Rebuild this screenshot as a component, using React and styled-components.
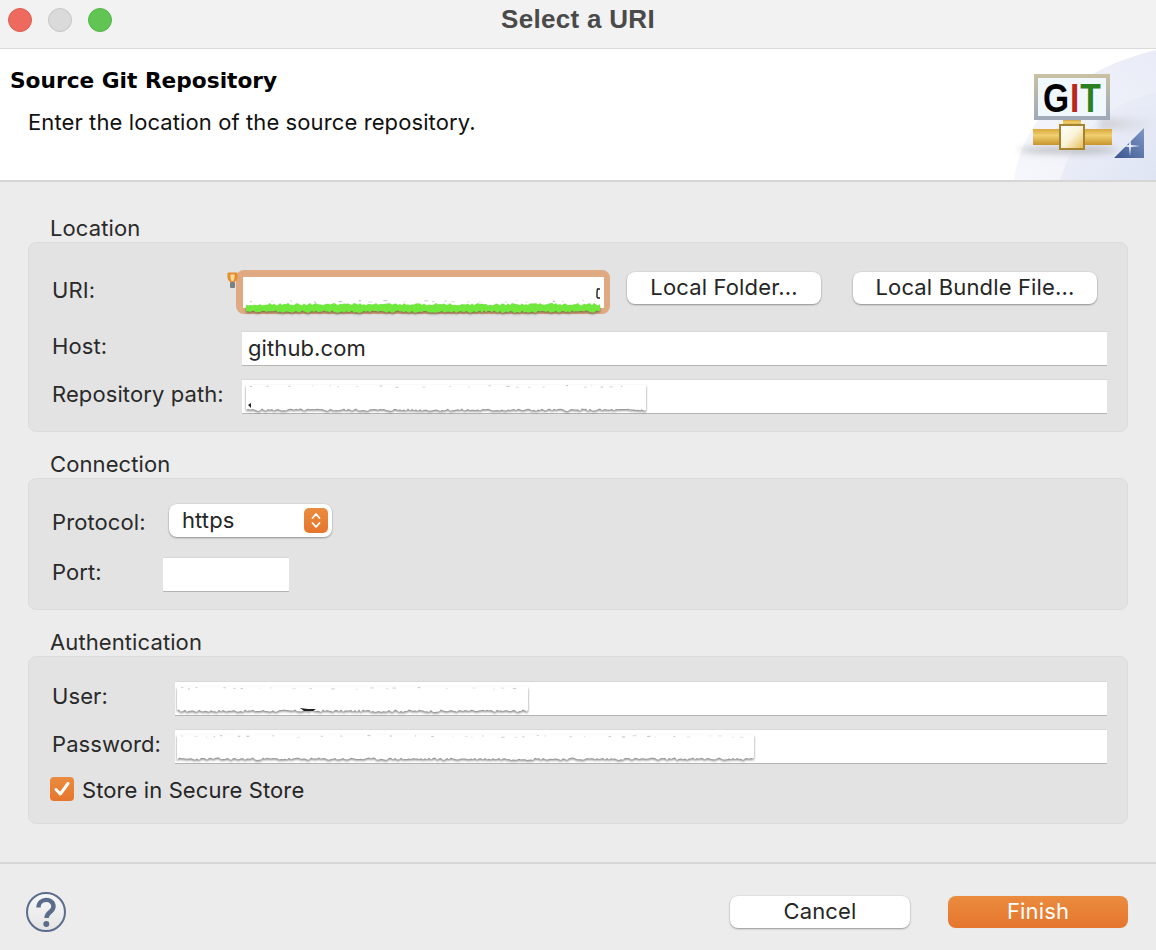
import React, { useId } from "react";
import styled, { createGlobalStyle } from "styled-components";

const Global = createGlobalStyle`
  html, body { margin: 0; padding: 0; background: #ececec; }
  * { box-sizing: border-box; }
`;
const Window = styled.div`
  width: 1156px; height: 950px; overflow: hidden; display: flex; flex-direction: column;
  background: #ececec; color: #262626;
  font-family: Inter, "Open Sans", "Liberation Sans", sans-serif; font-size: 22px; letter-spacing: .1px;
`;
const TitleBar = styled.div`
  position: relative; height: 49px; flex: none; display: flex; align-items: center; gap: 16px;
  padding: 0 0 9px 8px; background: #f2f2f2; border-bottom: 1px solid #d9d9d9;
`;
const Light = styled.span`
  width: 24px; height: 24px; border-radius: 50%; background: ${p => p.$c}; border: 1px solid ${p => p.$b};
`;
const WindowTitle = styled.div`
  position: absolute; left: 0; right: 0; top: 2px; text-align: center; letter-spacing: .3px;
  font-family: "Liberation Sans", sans-serif; font-weight: 700; font-size: 26px; line-height: 34px; color: #4a4a4a;
`;
const Header = styled.header`
  position: relative; height: 133px; flex: none; background: #fff; border-bottom: 2px solid #d6d6d6; padding: 17px 0 0 10px;
`;
const PageTitle = styled.h1`
  margin: 0; font-family: "DejaVu Sans", sans-serif; font-weight: 700; font-size: 21.7px; line-height: 30px; color: #000; letter-spacing: 0;
`;
const PageSub = styled.p`
  margin: 11px 0 0 18px; font-size: 22px; line-height: 30px; color: #111;
`;
const Banner = styled.svg`
  position: absolute; right: 0; top: 0;
`;
const Body = styled.main`
  flex: 1; padding: 33px 28px 0; display: flex; flex-direction: column; gap: 19px;
  border-bottom: 2px solid #d6d6d6;
`;
const Group = styled.section`
  display: flex; flex-direction: column;
`;
const Legend = styled.div`
  height: 27px; line-height: 27px; padding-left: 22px; color: #2a2a2a;
`;
const Box = styled.div`
  display: flex; flex-direction: column; gap: ${p => p.$gap}px; height: ${p => p.$h}px;
  padding: ${p => p.$top}px 20px 0 23px;
  background: #e3e3e3; border: 1px solid #dcdcdc; border-radius: 8px;
`;
const Row = styled.div`
  display: flex; align-items: center;
  margin: ${p => p.$m || 0};
`;
const Label = styled.label`
  flex: none; width: ${p => p.$w}px; color: #2a2a2a; line-height: 30px; position: relative; top: ${p => p.$dy || 0}px;
`;
const Field = styled.div`
  position: relative; flex: ${p => (p.$w ? "none" : "1")}; width: ${p => p.$w ? `${p.$w}px` : "auto"}; height: 34px;
  padding-left: 6px; line-height: 32px; background: #fff; color: #262626;
  border-top: 1px solid #d8d8d8; box-shadow: 0 1px 0 #b4b4b4;
`;
const Ring = styled.div`
  position: relative; flex: none; width: 374px; height: 44px; padding: 7px 6px 6px 7px;
  background: #dfaa82; border-radius: 8px; margin-right: 17px;
`;
const RingInner = styled.div`
  height: 100%; background: #fff; border-radius: 1px;
`;
const Bulb = styled.svg`
  position: absolute; left: -9px; top: 2px;
`;
const Scribble = styled.svg`
  position: absolute; left: ${p => p.$x}px; top: ${p => p.$y}px; overflow: visible;
`;
const Pill = styled.button`
  flex: none; width: ${p => p.$w}px; height: 32px; padding: 0 0 3px; margin-right: ${p => p.$mr || 0}px; margin-top: ${p => p.$mt || 0}px;
  align-self: ${p => p.$mt ? "flex-start" : "auto"};
  border: 0; border-radius: 8px; background: #fff; font: inherit; color: #262626; letter-spacing: .15px;
  box-shadow: 0 1px 2px rgba(0,0,0,.35), 0 0 0 .5px rgba(0,0,0,.06);
  line-height: 28px;
`;
const PrimaryPill = styled(Pill)`
  background: linear-gradient(#ea8c3f, #e5752c); color: #fff; box-shadow: 0 0 1px rgba(0,0,0,.15);
`;
const Select = styled.div`
  flex: none; width: 163px; height: 33px; margin-left: 1px; padding: 0 4px 0 13px; display: flex; align-items: center; justify-content: space-between;
  background: #fff; border-radius: 8px; box-shadow: 0 1px 2px rgba(0,0,0,.35), 0 0 0 .5px rgba(0,0,0,.06); color: #262626;
`;
const SelectValue = styled.span`
  position: relative; top: -1px;
`;
const Stepper = styled.span`
  width: 24px; height: 25px; border-radius: 5px; background: linear-gradient(#ea8c3f, #e5752c); display: flex; align-items: center; justify-content: center;
`;
const CheckBox = styled.span`
  width: 24px; height: 24px; flex: none; margin-right: 8px; border-radius: 4px; background: linear-gradient(#ea8c3f, #e5752c);
  display: flex; align-items: center; justify-content: center;
`;
const CheckText = styled.span`
  position: relative; top: 1px;
`;
const Footer = styled.footer`
  height: 86px; flex: none; display: flex; align-items: center; padding: 10px 28px 0 26px;
`;
const Spacer = styled.div`flex: 1;`;

const rng = seed => {
  let s = seed;
  return () => { s = (s * 9301 + 49297) % 233280; return s / 233280; };
};
const rough = (w, h, seed, amp, step = 3) => {
  const r = rng(seed);
  const pts = [];
  for (let x = 0; x <= w; x += step) pts.push(`${x},${(h - r() * amp).toFixed(1)}`);
  return `M0,1 L${w},1 L${w},${h - amp} L${pts.reverse().join(" L")} Z`;
};
const roughBand = (w, h, seed, amp) => {
  const r = rng(seed);
  const top = [];
  const bottom = [];
  for (let x = 0; x <= w; x += 2) {
    top.push(`${x},${(r() * amp).toFixed(1)}`);
    bottom.push(`${x},${(h - r() * amp).toFixed(1)}`);
  }
  return `M${top.join(" L")} L${bottom.reverse().join(" L")} Z`;
};
const specks = (w, seed) => {
  const r = rng(seed);
  const out = [];
  for (let x = 4; x < w - 4; x += 6 + r() * 22) out.push({ x, y: 1 + r() * 2, l: 1 + r() * 3, o: .25 + r() * .5 });
  return out;
};

const Redaction = ({ x, y, w, h, seed, children }) => {
  const id = useId();
  return (
    <Scribble $x={x} $y={y} width={w} height={h}>
      <defs>
        <filter id={id} x="-2%" y="-20%" width="104%" height="150%" colorInterpolationFilters="sRGB">
          <feDropShadow dx="0" dy="1.5" stdDeviation="1.2" floodColor="#000" floodOpacity=".5" />
        </filter>
      </defs>
      <path d={rough(w, h, seed, 2.5, 2)} fill="#fff" filter={`url(#${id})`} />
      {specks(w, seed + 3).map((d, i) => (
        <rect key={i} x={d.x} y={d.y} width={d.l} height="1" fill="#aaa" opacity={d.o} />
      ))}
      {children}
    </Scribble>
  );
};

const GreenMark = () => {
  const id = useId();
  return (
    <Scribble $x={10} $y={26} width={354} height={17}>
      <defs>
        <filter id={id} x="-2%" y="-30%" width="104%" height="170%" colorInterpolationFilters="sRGB">
          <feDropShadow dx="0" dy="1.5" stdDeviation="1" floodColor="#000" floodOpacity=".4" />
        </filter>
      </defs>
      <path transform="translate(0,7)" d={roughBand(354, 10, 37, 2.5)} fill="#70e83c" filter={`url(#${id})`} />
      {specks(350, 9).map((d, i) => (
        <rect key={i} x={d.x} y={d.y + 3} width={d.l} height="1" fill="#999" opacity={d.o} />
      ))}
      <path d="M354,-7 L351.5,-7 L351,-4 L351,1 L352,2 L354,2" fill="none" stroke="#222" strokeWidth="1.4" />
    </Scribble>
  );
};

const GitBanner = () => (
  <Banner width="156" height="131" viewBox="1000 49 156 131">
    <defs>
      <linearGradient id="bgA" x1="0" y1="1" x2="1" y2="0">
        <stop offset="0" stopColor="#f6f7fc" />
        <stop offset="1" stopColor="#e9ecf7" />
      </linearGradient>
      <linearGradient id="bgB" x1="0" y1="0" x2="1" y2="1">
        <stop offset="0" stopColor="#f1f3fa" />
        <stop offset="1" stopColor="#dbe1f2" />
      </linearGradient>
      <linearGradient id="frame" x1="0" y1="0" x2="0" y2="1">
        <stop offset="0" stopColor="#c9c1a2" />
        <stop offset="1" stopColor="#9fa9b8" />
      </linearGradient>
      <linearGradient id="pipe" x1="0" y1="0" x2="0" y2="1">
        <stop offset="0" stopColor="#d9a83c" />
        <stop offset=".4" stopColor="#f0d070" />
        <stop offset="1" stopColor="#c8942c" />
      </linearGradient>
      <linearGradient id="joint" x1="0" y1="0" x2="1" y2="1">
        <stop offset="0" stopColor="#ffffff" />
        <stop offset=".5" stopColor="#fbf3d8" />
        <stop offset="1" stopColor="#e4b94c" />
      </linearGradient>
      <linearGradient id="tri" x1="1" y1="0" x2="0" y2="1">
        <stop offset="0" stopColor="#7f98c4" />
        <stop offset="1" stopColor="#3c5590" />
      </linearGradient>
      <linearGradient id="haze" x1="0" y1="0" x2="1" y2="0">
        <stop offset="0" stopColor="#b8b8b8" stopOpacity=".55" />
        <stop offset="1" stopColor="#b8b8b8" stopOpacity="0" />
      </linearGradient>
      <filter id="soft" x="-20%" y="-150%" width="140%" height="400%">
        <feGaussianBlur stdDeviation="3.5" />
      </filter>
    </defs>
    <path d="M1014,180 C1022,118 1074,70 1156,50 L1156,180 Z" fill="url(#bgA)" />
    <path d="M1060,180 C1075,130 1110,104 1156,92 L1156,180 Z" fill="url(#bgB)" opacity=".8" />
    <rect x="1100" y="118" width="56" height="12" fill="url(#haze)" filter="url(#soft)" />
    <ellipse cx="1068" cy="150" rx="50" ry="3.5" fill="#7a7a7a" opacity=".45" filter="url(#soft)" />
    <rect x="1034" y="74" width="76" height="46" fill="url(#frame)" />
    <rect x="1038" y="78" width="68" height="38" fill="#f1f8fd" />
    <text transform="translate(1043,112) scale(.84,1)" fontFamily="Liberation Sans, sans-serif" fontWeight="700" fontSize="40">
      <tspan fill="#000">G</tspan>
      <tspan fill="#b9281c" dx="1">I</tspan>
      <tspan fill="#2d8022" dx="1">T</tspan>
    </text>
    <rect x="1063" y="120" width="18" height="6" fill="url(#pipe)" />
    <rect x="1033" y="129" width="79" height="16" fill="url(#pipe)" />
    <rect x="1060" y="125" width="24" height="24" fill="url(#joint)" stroke="#a8832f" strokeWidth="2" />
    <path d="M1144,128 L1144,158 L1114,158 Z" fill="url(#tri)" />
    <path d="M1130,137 L1131,145 L1140,146 L1131,147 L1130,156 L1129,147 L1120,146 L1129,145 Z" fill="#e8eef8" />
  </Banner>
);

const Check = () => (
  <svg width="18" height="18" viewBox="0 0 18 18">
    <path d="M3 9.5 L7.3 14 L15 3.5" fill="none" stroke="#fff" strokeWidth="3" strokeLinecap="round" strokeLinejoin="round" />
  </svg>
);
const Chevrons = () => (
  <svg width="12" height="19" viewBox="0 0 12 19">
    <path d="M2.5 7 L6 3 L9.5 7 M2.5 12 L6 16 L9.5 12" fill="none" stroke="#fff" strokeWidth="1.8" strokeLinecap="round" strokeLinejoin="round" />
  </svg>
);
const BulbIcon = () => (
  <Bulb width="11" height="16" viewBox="0 0 11 16">
    <path d="M.5,1.5 Q.5,.5 1.5,.5 L9.5,.5 Q10.5,.5 10.5,1.5 L10.5,5.5 Q10.5,8 8,10 L3,10 Q.5,8 .5,5.5 Z" fill="#e58d2f" />
    <path d="M3.5,2.5 L7.5,2.5 L7.5,6 L6.5,9 L4.5,9 L3.5,6 Z" fill="#f9dc9b" />
    <rect x="3" y="10" width="5" height="6" rx="1" fill="#7b7f86" />
  </Bulb>
);
const Help = () => (
  <svg width="40" height="40" viewBox="0 0 40 40">
    <defs>
      <linearGradient id="hb" x1="0" y1="0" x2="0" y2="1">
        <stop offset="0" stopColor="#f8f8f8" />
        <stop offset="1" stopColor="#e4e4e4" />
      </linearGradient>
    </defs>
    <circle cx="20" cy="20" r="19" fill="url(#hb)" stroke="#5a6d8d" strokeWidth="2" />
    <path d="M12.5 15.5 C12.5 5.5 27.5 5.5 27.5 14.5 C27.5 20 20.5 20 20.5 26" fill="none" stroke="#5a6d8d" strokeWidth="4.4" />
    <circle cx="20.3" cy="32" r="3" fill="#5a6d8d" />
  </svg>
);

export default function App() {
  return (
    <>
      <Global />
      <Window>
        <TitleBar>
          <Light $c="#ee6a5f" $b="#d95f55" />
          <Light $c="#dadada" $b="#c6c6c6" />
          <Light $c="#61c554" $b="#56b34a" />
          <WindowTitle>Select a URI</WindowTitle>
        </TitleBar>
        <Header>
          <PageTitle>Source Git Repository</PageTitle>
          <PageSub>Enter the location of the source repository.</PageSub>
          <GitBanner />
        </Header>
        <Body>
          <Group>
            <Legend>Location</Legend>
            <Box $h={190} $top={27} $gap={14}>
              <Row $m="0 0 3px">
                <Label $w={184} $dy={-2}>URI:</Label>
                <Ring>
                  <BulbIcon />
                  <RingInner />
                  <GreenMark />
                </Ring>
                <Pill $w={194} $mr={32} $mt={2}>Local Folder...</Pill>
                <Pill $w={244} $mt={2}>Local Bundle File...</Pill>
              </Row>
              <Row>
                <Label $w={190} $dy={-2}>Host:</Label>
                <Field>github.com</Field>
              </Row>
              <Row>
                <Label $w={190} $dy={-2}>Repository path:</Label>
                <Field>
                  <Redaction x={4} y={4} w={400} h={27} seed={5}>
                    <path d="M2,21 L5,19 L5,24 Z" fill="#222" />
                  </Redaction>
                </Field>
              </Row>
            </Box>
          </Group>
          <Group>
            <Legend>Connection</Legend>
            <Box $h={132} $top={25} $gap={20}>
              <Row>
                <Label $w={116} $dy={1}>Protocol:</Label>
                <Select><SelectValue>https</SelectValue><Stepper><Chevrons /></Stepper></Select>
              </Row>
              <Row>
                <Label $w={111} $dy={-2}>Port:</Label>
                <Field $w={126} />
              </Row>
            </Box>
          </Group>
          <Group>
            <Legend>Authentication</Legend>
            <Box $h={168} $top={24} $gap={14}>
              <Row>
                <Label $w={123} $dy={-2}>User:</Label>
                <Field>
                  <Redaction x={2} y={4} w={351} h={26} seed={17}>
                    <path d="M123,22 L131,23 L139,23 L136,25 L127,25 Z" fill="#222" />
                  </Redaction>
                </Field>
              </Row>
              <Row>
                <Label $w={123} $dy={-2}>Password:</Label>
                <Field><Redaction x={2} y={4} w={577} h={26} seed={23} /></Field>
              </Row>
              <Row $m="-1px 0 0 -2px">
                <CheckBox><Check /></CheckBox>
                <CheckText>Store in Secure Store</CheckText>
              </Row>
            </Box>
          </Group>
        </Body>
        <Footer>
          <Help />
          <Spacer />
          <Pill $w={180} $mr={38}>Cancel</Pill>
          <PrimaryPill $w={180}>Finish</PrimaryPill>
        </Footer>
      </Window>
    </>
  );
}
